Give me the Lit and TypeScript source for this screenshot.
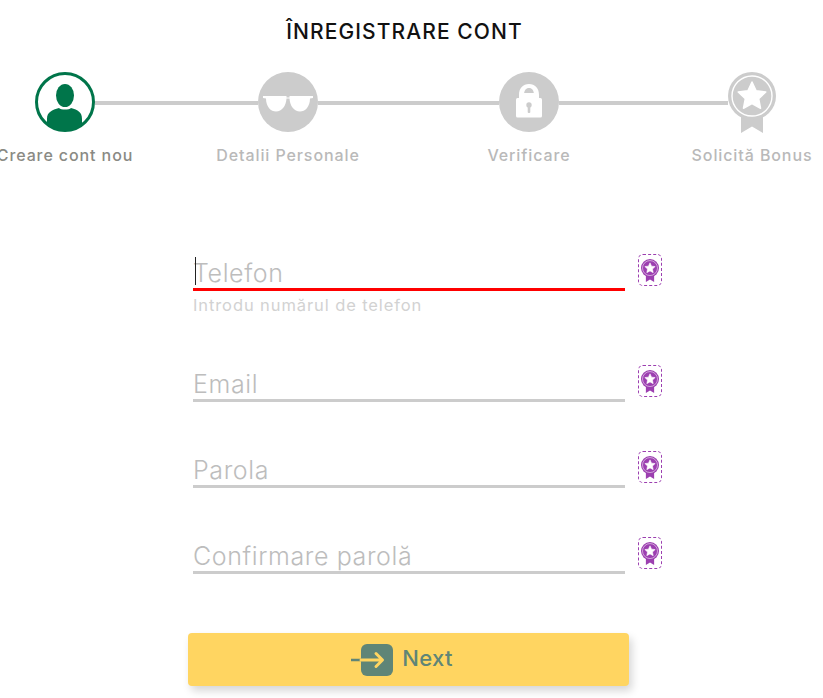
import { LitElement, html, css, svg } from "lit";
import { customElement } from "lit/decorators.js";

const star = (cx: number, cy: number, R: number, r: number) => {
  const pts: string[] = [];
  for (let i = 0; i < 10; i++) {
    const a = -Math.PI / 2 + (i * Math.PI) / 5;
    const q = i % 2 ? r : R;
    pts.push(`${(cx + q * Math.cos(a)).toFixed(2)},${(cy + q * Math.sin(a)).toFixed(2)}`);
  }
  return pts.join(" ");
};

const medal = (color: string) => svg`
  <path d="M13 38 H35 V61 L24 54.5 L13 61 Z" fill=${color}></path>
  <circle cx="24" cy="24" r="24" fill=${color}></circle>
  <circle cx="24" cy="24" r="20" fill="none" stroke="#fff" stroke-width="1.4"></circle>
  <polygon points=${star(24, 24.5, 14.5, 7)} fill="#fff" stroke="#fff" stroke-width="1.5" stroke-linejoin="round"></polygon>
`;

@customElement("app-root")
export class AppRoot extends LitElement {
  static styles = css`
    :host {
      display: block;
      width: 823px;
      height: 698px;
      overflow: hidden;
      background: #fff;
      font-family: Inter, "Open Sans", "Liberation Sans", sans-serif;
    }
    h1 {
      margin: 0;
      padding-top: 20px;
      height: 72px;
      box-sizing: border-box;
      text-align: center;
      padding-right: 14px;
      font-size: 21px;
      line-height: 24px;
      font-weight: 500;
      color: #111;
      letter-spacing: 1.1px;
    }
    .track {
      display: flex;
      align-items: flex-start;
      padding-left: 35px;
      height: 61px;
    }
    .track svg { display: block; flex: none; }
    .line {
      flex: none;
      height: 4px;
      margin-top: 29px;
      background: #ccc;
    }
    .labels {
      display: grid;
      grid-template-columns: 200px 246px 236px 210px;
      margin: 12px 0 0 -35px;
      font-size: 16px;
      line-height: 20px;
      font-weight: 500;
      letter-spacing: 0.9px;
      color: #b9b9b9;
      text-align: center;
      white-space: nowrap;
    }
    .labels .active { color: #8a8a84; }
    form {
      display: flex;
      flex-direction: column;
      margin: 0;
      padding: 91px 0 0 193px;
    }
    .row {
      display: flex;
      align-items: flex-start;
      gap: 13px;
      height: 86px;
    }
    .row.first { height: 111px; }
    .field { width: 432px; }
    .control {
      position: relative;
      height: 35px;
      box-sizing: border-box;
      border-bottom: 3px solid #ccc;
      font-size: 25px;
      line-height: 30px;
      padding-top: 2px;
      font-weight: 300;
      color: #bdbdbd;
      letter-spacing: 0.6px;
    }
    .control.error { border-bottom-color: #f00; }
    .caret {
      position: absolute;
      left: 2px;
      top: 1px;
      width: 1px;
      height: 28px;
      background: #222;
    }
    .help {
      margin-top: 4px;
      font-size: 16.5px;
      line-height: 20px;
      color: #d2d2d2;
      letter-spacing: 0.9px;
    }
    .badge {
      width: 24px;
      height: 32px;
      box-sizing: border-box;
      margin-top: -2px;
      border: 1px dashed #9c3fb0;
      border-radius: 5px;
      display: flex;
      align-items: center;
      justify-content: center;
    }
    .next {
      display: flex;
      align-items: center;
      justify-content: center;
      gap: 9px;
      width: 441px;
      height: 53px;
      margin: 8px 0 0 188px;
      padding: 0 13px 0 0;
      box-sizing: border-box;
      border: none;
      border-radius: 4px;
      background: #ffd561;
      box-shadow: 3px 5px 8px rgba(0, 0, 0, 0.16);
      color: #5f8577;
      font-family: inherit;
      font-size: 22px;
      font-weight: 500;
      letter-spacing: 0.3px;
    }
    .next svg { display: block; }
    .next span { margin-bottom: 3px; }
  `;

  private personIcon() {
    return html`<svg width="60" height="60" viewBox="0 0 60 60">
      <defs><clipPath id="c"><circle cx="30" cy="30" r="28.5"></circle></clipPath></defs>
      <circle cx="30" cy="30" r="28.5" fill="#fff" stroke="#00754a" stroke-width="3"></circle>
      <ellipse cx="30" cy="23.5" rx="9" ry="11.5" fill="#00754a"></ellipse>
      <path clip-path="url(#c)" d="M12 60 V47 C12 40 17 38 24 36 C26 38 34 38 36 36 C43 38 47 40 47 47 V60 Z" fill="#00754a"></path>
    </svg>`;
  }

  private glassesIcon() {
    return html`<svg width="60" height="60" viewBox="0 0 60 60">
      <circle cx="30" cy="30" r="30" fill="#ccc"></circle>
      <path d="M5 24 H55 V26 L52 26.500 C52 35 47 39.500 42 39.500 C36 39.500 32 34 31.500 26.500 H28.500 C28 34 24 39.500 18 39.500 C13 39.500 8 35 8 26.500 L5 26 Z" fill="#fff"></path>
      <rect x="28.500" y="24" width="3" height="1.500" fill="#ccc"></rect>
    </svg>`;
  }

  private lockIcon() {
    return html`<svg width="60" height="60" viewBox="0 0 60 60">
      <circle cx="30" cy="30" r="30" fill="#ccc"></circle>
      <path d="M20 27 V23 C20 16 24 12 30 12 C36 12 40 16 40 23 V27 H35 V23 C35 18.500 33 16 30 16 C27 16 25 18.500 25 23 V27 Z" fill="#fff"></path>
      <path d="M24 21 H36 V27 H24 Z" fill="#fff"></path>
      <rect x="17" y="26" width="26" height="19.500" rx="1.500" fill="#fff"></rect>
      <circle cx="30" cy="33" r="2.700" fill="#ccc"></circle>
      <rect x="28.700" y="33" width="2.600" height="8" rx="1" fill="#ccc"></rect>
    </svg>`;
  }

  private badge() {
    return html`<div class="badge">
      <svg width="18" height="23" viewBox="0 0 48 61">${medal("#9c3fb0")}</svg>
    </div>`;
  }

  render() {
    return html`
      <h1>ÎNREGISTRARE CONT</h1>
      <div class="track">
        ${this.personIcon()}
        <div class="line" style="width:163px"></div>
        ${this.glassesIcon()}
        <div class="line" style="width:181px"></div>
        ${this.lockIcon()}
        <div class="line" style="width:169px"></div>
        <svg width="48" height="61" viewBox="0 0 48 61">${medal("#ccc")}</svg>
      </div>
      <div class="labels">
        <span class="active">Creare cont nou</span>
        <span>Detalii Personale</span>
        <span>Verificare</span>
        <span>Solicită Bonus</span>
      </div>
      <form>
        <div class="row first">
          <div class="field">
            <div class="control error"><span class="caret"></span>Telefon</div>
            <div class="help">Introdu numărul de telefon</div>
          </div>
          ${this.badge()}
        </div>
        <div class="row">
          <div class="field"><div class="control">Email</div></div>
          ${this.badge()}
        </div>
        <div class="row">
          <div class="field"><div class="control">Parola</div></div>
          ${this.badge()}
        </div>
        <div class="row">
          <div class="field"><div class="control">Confirmare parolă</div></div>
          ${this.badge()}
        </div>
      </form>
      <button class="next" type="button">
        <svg width="42" height="32" viewBox="0 0 42 32">
          <rect x="10" y="0" width="32" height="32" rx="6" fill="#5f8577"></rect>
          <path d="M0 16 H10" stroke="#5f8577" stroke-width="2.500" stroke-linecap="round"></path>
          <path d="M10 16 H31 M25 9.500 L31.500 16 L25 22.500" fill="none" stroke="#ffd561" stroke-width="3" stroke-linecap="round" stroke-linejoin="round"></path>
        </svg>
        <span>Next</span>
      </button>
    `;
  }
}
